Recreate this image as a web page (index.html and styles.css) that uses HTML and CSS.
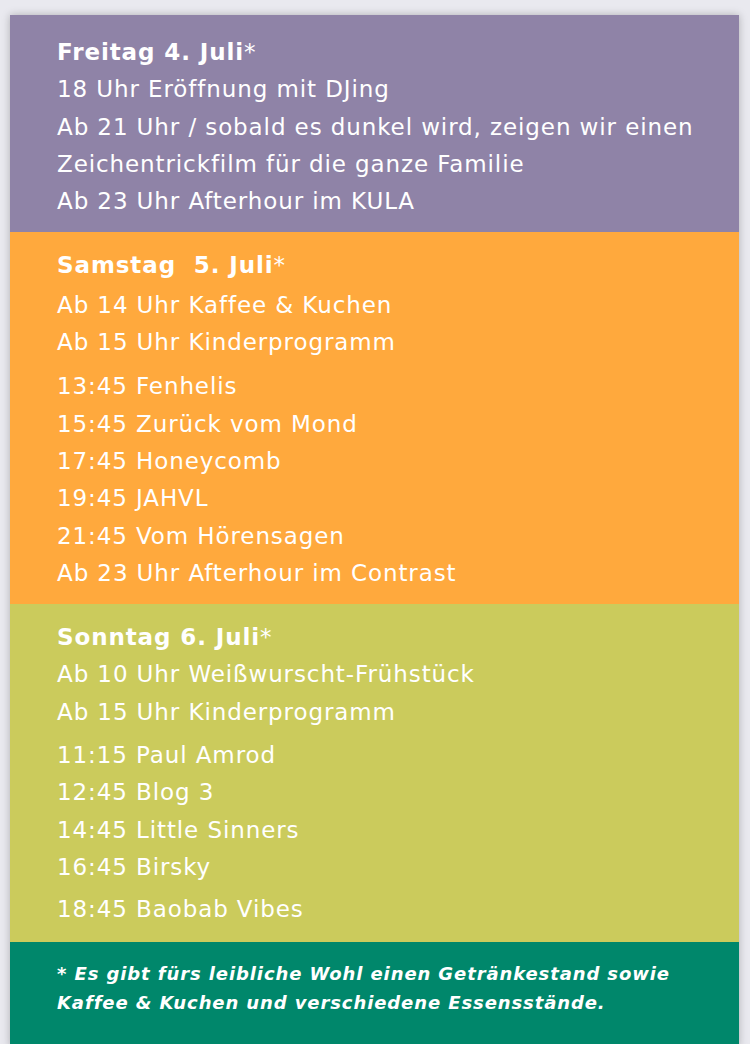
FILE: index.html
```html
<!DOCTYPE html>
<html lang="de">
<head>
<meta charset="utf-8">
<link rel="stylesheet" href="styles.css">
</head>
<body>
<div class="card">
  <section class="day purple">
    <p class="head">Freitag 4. Juli<span class="ast">*</span></p>
    <p>18 Uhr Eröffnung mit DJing</p>
    <p>Ab 21 Uhr / sobald es dunkel wird, zeigen wir einen Zeichentrickfilm für die ganze Familie</p>
    <p>Ab 23 Uhr Afterhour im KULA</p>
  </section>
  <section class="day orange">
    <p class="head">Samstag&nbsp; 5. Juli<span class="ast">*</span></p>
    <p>Ab 14 Uhr Kaffee &amp; Kuchen</p>
    <p>Ab 15 Uhr Kinderprogramm</p>
    <div class="group">
      <p>13:45 Fenhelis</p>
      <p>15:45 Zurück vom Mond</p>
      <p>17:45 Honeycomb</p>
      <p>19:45 JAHVL</p>
      <p>21:45 Vom Hörensagen</p>
      <p>Ab 23 Uhr Afterhour im Contrast</p>
    </div>
  </section>
  <section class="day olive">
    <p class="head">Sonntag 6. Juli<span class="ast">*</span></p>
    <p>Ab 10 Uhr Weißwurscht-Frühstück</p>
    <p>Ab 15 Uhr Kinderprogramm</p>
    <div class="group">
      <p>11:15 Paul Amrod</p>
      <p>12:45 Blog 3</p>
      <p>14:45 Little Sinners</p>
      <p>16:45 Birsky</p>
      <p class="last">18:45 Baobab Vibes</p>
    </div>
  </section>
  <section class="note">
    <p>* Es gibt fürs leibliche Wohl einen Getränkestand sowie Kaffee &amp; Kuchen und verschiedene Essensstände.</p>
  </section>
</div>
</body>
</html>
```
FILE: styles.css
```css
html, body {
  margin: 0;
  padding: 0;
  background: #e9e9ef;
}
body {
  padding: 15px 11px 0 10px;
  font-family: "DejaVu Sans", Verdana, sans-serif;
  color: #fff;
}
.card {
  box-shadow: 0 0 8px rgba(0,0,0,0.25);
}
p { margin: 0; }
.day {
  padding: 15px 20px 12px 47px;
  font-size: 23px;
  line-height: 37.3px;
  letter-spacing: 0.9px;
}
.head { font-weight: bold; }
.ast { font-weight: normal; }
.purple { background: #8f83a7; padding-top: 19px; padding-bottom: 12px; }
.orange { background: #ffa93d; }
.orange .head { margin-bottom: 2px; }
.orange .group { margin-top: 7px; }
.olive { background: #cbcb5c; padding-bottom: 13px; }
.group { margin-top: 6px; }
.last { margin-top: 5px; }
.note {
  background: #00876b;
  padding: 17px 20px 30px 47px;
  font-size: 18px;
  line-height: 29px;
  letter-spacing: 0.9px;
  font-weight: bold;
  font-style: italic;
}
```
